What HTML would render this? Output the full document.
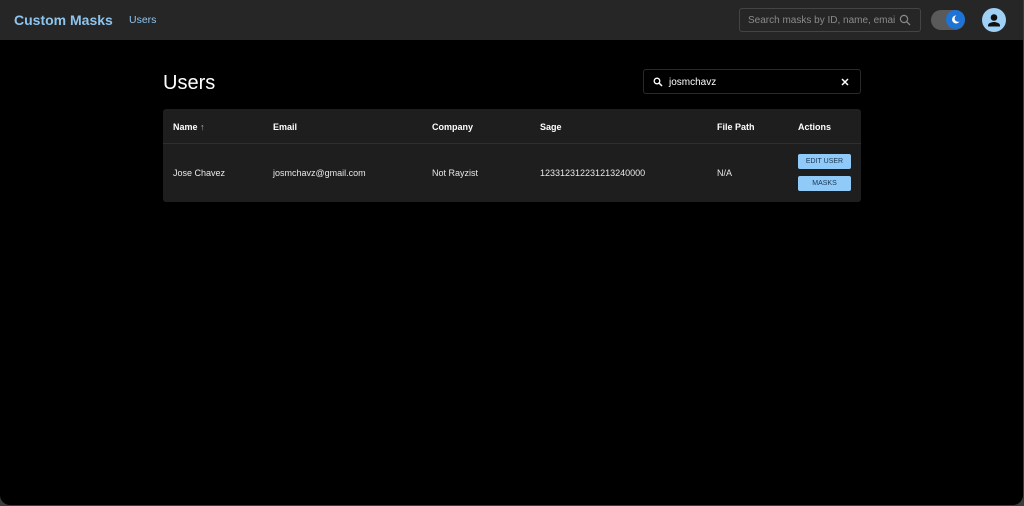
<!DOCTYPE html>
<html><head><meta charset="utf-8"><style>
*{box-sizing:border-box;margin:0;padding:0}
html,body{width:1024px;height:506px;overflow:hidden;background:#3a3d3e}
body{font-family:"Liberation Sans",sans-serif;color:#fff}
.frame{position:absolute;left:0;top:0;width:1023px;height:505px;background:#000;border-radius:0 0 10px 10px;overflow:hidden}
.top{position:absolute;left:0;top:0;width:1023px;height:40px;background:#262626}
.logo{position:absolute;left:14px;top:12px;font-size:14px;font-weight:bold;color:#8ec5ef}
.nav{position:absolute;left:129px;top:14px;font-size:10.5px;color:#8ec5ef}
.srch{position:absolute;left:739px;top:8px;width:182px;height:24px;border:1px solid #444;border-radius:3px;font-size:10px;color:#8a8a8a;padding:6px 0 0 8px}
.tog{position:absolute;left:931px;top:10px;width:34px;height:20px;border-radius:10px;background:#5a5a5a}
.knob{position:absolute;left:946px;top:10px;width:19px;height:19px;border-radius:50%;background:#1e73d6}
.av{position:absolute;left:982px;top:8px;width:24px;height:24px;border-radius:50%;background:#9fd0f5}
h1{position:absolute;left:163px;top:72px;font-size:20px;font-weight:normal}
.fs{position:absolute;left:643px;top:69px;width:218px;height:25px;border:1px solid #2a2a2a;border-radius:3px;font-size:10px;padding:7px 0 0 25px}
.tbl{position:absolute;left:163px;top:109px;width:698px;height:93px;background:#1e1e1e;border-radius:3px}
.hd{position:absolute;top:13px;font-size:9px;font-weight:bold}
.cl{position:absolute;top:59px;font-size:9px;color:#e8e8e8}
.line{position:absolute;left:0;top:34px;width:698px;height:1px;background:#2f2f2f}
.btn{position:absolute;left:635px;width:53px;height:15px;background:#90caf9;border-radius:2px;color:#1a3550;font-size:7px;text-align:center;line-height:16px}
</style></head><body><div class="frame">
<div class="top">
<div class="logo">Custom Masks</div><div class="nav">Users</div>
<div class="srch">Search masks by ID, name, emai
<svg style="position:absolute;right:9px;top:5px" width="12" height="12" viewBox="0 0 12 12"><circle cx="5" cy="5" r="3.6" fill="none" stroke="#888" stroke-width="1.2"/><path d="M7.6 7.6L11 11" stroke="#888" stroke-width="1.3"/></svg></div>
<div class="tog"></div><div class="knob"><svg width="19" height="19" viewBox="0 0 19 19"><path d="M10.5 5.5a4 4 0 1 0 3 6a3.2 3.2 0 0 1-3-6z" fill="#fff"/></svg></div>
<div class="av"><svg width="24" height="24" viewBox="0 0 24 24"><circle cx="12" cy="9.5" r="3.3" fill="#111"/><path d="M6 17.5c0-2.5 4-3.5 6-3.5s6 1 6 3.5v1H6z" fill="#111"/></svg></div>
</div>
<h1>Users</h1>
<div class="fs"><svg style="position:absolute;left:9px;top:7px" width="10" height="10" viewBox="0 0 10 10"><circle cx="4" cy="4" r="2.8" fill="none" stroke="#fff" stroke-width="1.3"/><path d="M6 6L9 9" stroke="#fff" stroke-width="1.5"/></svg>josmchavz
<svg style="position:absolute;right:11px;top:8px" width="8" height="8" viewBox="0 0 8 8"><path d="M1 1L7 7M7 1L1 7" stroke="#fff" stroke-width="1.5"/></svg></div>
<div class="tbl">
<div class="hd" style="left:10px">Name <span style="font-weight:normal;color:#bbb">↑</span></div>
<div class="hd" style="left:110px">Email</div>
<div class="hd" style="left:269px">Company</div>
<div class="hd" style="left:377px">Sage</div>
<div class="hd" style="left:554px">File Path</div>
<div class="hd" style="left:635px">Actions</div>
<div class="line"></div>
<div class="cl" style="left:10px">Jose Chavez</div>
<div class="cl" style="left:110px">josmchavz@gmail.com</div>
<div class="cl" style="left:269px">Not Rayzist</div>
<div class="cl" style="left:377px">123312312231213240000</div>
<div class="cl" style="left:554px">N/A</div>
<div class="btn" style="top:45px">EDIT USER</div>
<div class="btn" style="top:67px">MASKS</div>
</div>
</div></body></html>
